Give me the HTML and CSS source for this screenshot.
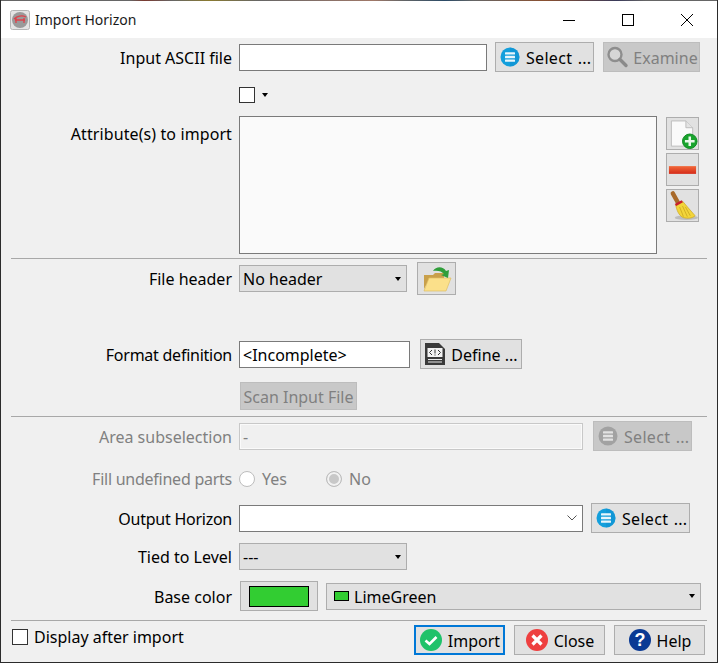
FILE: index.html
```html
<!DOCTYPE html>
<html>
<head>
  <title>Import Horizon</title>
  <link rel="stylesheet" href="styles.css">
</head>
<body>
  <svg class="defs" width="0" height="0">
    <symbol id="ico-select" viewBox="0 0 20 20">
      <circle cx="10" cy="10" r="9.5" fill="#139fdc"/>
      <path d="M10 .5a9.5 9.5 0 0 1 0 19z" fill="#0f8fd0" opacity=".5"/>
      <rect x="5" y="5.2" width="10" height="2.4" rx=".5" fill="#e8f6fc"/>
      <rect x="5" y="8.8" width="10" height="2.4" rx=".5" fill="#e8f6fc"/>
      <rect x="5" y="12.4" width="10" height="2.4" rx=".5" fill="#e8f6fc"/>
    </symbol>
    <symbol id="ico-select-off" viewBox="0 0 20 20">
      <circle cx="10" cy="10" r="9.5" fill="#a2a2a2"/>
      <rect x="5" y="5.2" width="10" height="2.4" rx=".5" fill="#e2e2e2"/>
      <rect x="5" y="8.8" width="10" height="2.4" rx=".5" fill="#e2e2e2"/>
      <rect x="5" y="12.4" width="10" height="2.4" rx=".5" fill="#e2e2e2"/>
    </symbol>
  </svg>

  <div class="window">
    <div class="desk-strip"></div>
    <div class="titlebar">
      <svg class="app-icon" width="20" height="20" viewBox="0 0 20 20">
        <rect x=".5" y=".5" width="19" height="19" rx="2" fill="#e4e4e4" stroke="#b5b5b5"/>
        <circle cx="10" cy="10" r="8" fill="#9a9a9a"/>
        <path d="M4 9c3-3 8-4 12-2M6 8v5M14 8v5M5 10h10" fill="none" stroke="#e0404a" stroke-width="1.3"/>
      </svg>
      <span class="title">Import Horizon</span>
      <div class="win-controls">
        <svg width="12" height="12" viewBox="0 0 12 12" class="wc wc-min"><path d="M0 6.5h12" stroke="#000"/></svg>
        <svg width="12" height="12" viewBox="0 0 12 12" class="wc wc-max"><rect x=".5" y=".5" width="11" height="11" fill="none" stroke="#000"/></svg>
        <svg width="12" height="12" viewBox="0 0 12 12" class="wc wc-close"><path d="M0 0l12 12M12 0L0 12" stroke="#000"/></svg>
      </div>
    </div>

    <div class="form">
      <div class="row r-input">
        <label class="lbl">Input ASCII file</label>
        <div class="field w-248"></div>
        <button class="btn btn-select">
          <svg width="20" height="20"><use href="#ico-select"/></svg><span class="txt">Select ...</span>
        </button>
        <button class="btn off btn-examine">
          <svg width="24" height="24" viewBox="0 0 24 24">
            <circle cx="10" cy="9.5" r="6.5" fill="#d6d6d6" stroke="#8e8e8e" stroke-width="2.4"/>
            <path d="M15 14.500l6 6" stroke="#8a8a8a" stroke-width="3.4" stroke-linecap="round"/>
          </svg><span class="txt">Examine</span>
        </button>
      </div>

      <div class="row r-check">
        <span class="check"></span>
        <span class="caret small"></span>
      </div>

      <div class="row r-attrs">
        <label class="lbl loose">Attribute(s) to import</label>
        <div class="listbox"></div>
        <div class="tool-col">
          <button class="tool">
            <svg width="32" height="32" viewBox="0 0 32 32">
              <path d="M4.500 2.500h15l7 7v19h-22z" fill="#fafafa" stroke="#bdbdbd"/>
              <path d="M19.500 2.500v7h7" fill="#e4e4e4" stroke="#bdbdbd"/>
              <circle cx="23.500" cy="23.500" r="7.500" fill="#18a32d" stroke="#0f8a22"/>
              <path d="M23.500 18.500v10M18.500 23.500h10" stroke="#e9f7ea" stroke-width="2.600"/>
            </svg>
          </button>
          <button class="tool">
            <svg width="32" height="32" viewBox="0 0 32 32">
              <defs><linearGradient id="minus" x1="0" y1="0" x2="0" y2="1"><stop offset="0" stop-color="#f2693a"/><stop offset="1" stop-color="#d42a18"/></linearGradient></defs>
              <rect x="2" y="12" width="28" height="8" fill="url(#minus)"/>
            </svg>
          </button>
          <button class="tool">
            <svg width="32" height="32" viewBox="0 0 32 32">
              <ellipse cx="20" cy="28" rx="12" ry="2.500" fill="#bdbdbd"/>
              <path d="M6 3l5 9" stroke="#a86a2a" stroke-width="4.500" stroke-linecap="round"/>
              <path d="M9 15l7-4 6 7 7 8c-3 3-8 3-12 2-5-2-7-8-8-13z" fill="#f2d53a" stroke="#c9a51e" stroke-width=".7"/>
              <path d="M13 17l4 10M16 16l5 11M19 17l5 9" stroke="#c9a51e" stroke-width=".8"/>
              <path d="M8 14l7-4 1.500 2-7 4z" fill="#c8202c"/>
            </svg>
          </button>
        </div>
      </div>

      <hr class="sep s-1">

      <div class="row r-header">
        <label class="lbl flat">File header</label>
        <div class="combo w-168">No header<span class="caret"></span></div>
        <button class="tool folder">
          <svg width="32" height="28" viewBox="0 0 32 28">
            <path d="M3 10h9l2-2h9v5H9L3 24z" fill="#c9a04a"/>
            <path d="M8 13h22l-5 13H3z" fill="#fbe08a" stroke="#e0bf62" stroke-width=".7"/>
            <path d="M12 6c3-5 10-5 13 0l3-1-1 8-7-3 3-1c-2-3-7-4-11-3z" fill="#2f9e3a"/>
          </svg>
        </button>
      </div>

      <div class="row r-format">
        <label class="lbl tight">Format definition</label>
        <div class="field w-171"><span class="txt">&lt;Incomplete&gt;</span></div>
        <button class="btn btn-define">
          <svg width="22" height="24" viewBox="0 0 22 24">
            <path d="M1 1h14l6 6v16H1z" fill="#3a3a3a"/>
            <rect x="3.500" y="6" width="15" height="9" fill="#f2f2f2"/>
            <path d="M8 8l-2.500 2.500L8 13M14 8l2.500 2.500L14 13M11 7.500v4M11 12.500v1" fill="none" stroke="#333" stroke-width="1"/>
            <path d="M4 17.500h14M4 20h14" stroke="#e8e8e8"/>
          </svg><span class="txt">Define ...</span>
        </button>
      </div>

      <div class="row r-scan">
        <button class="btn off btn-scan"><span class="txt">Scan Input File</span></button>
      </div>

      <hr class="sep s-2">

      <div class="row r-area">
        <label class="lbl dim">Area subselection</label>
        <div class="field off w-344"><span class="txt">-</span></div>
        <button class="btn off btn-select">
          <svg width="20" height="20"><use href="#ico-select-off"/></svg><span class="txt">Select ...</span>
        </button>
      </div>

      <div class="row r-fill">
        <label class="lbl dim flat tight">Fill undefined parts</label>
        <span class="radio"></span><span class="radio-text yes">Yes</span>
        <span class="radio on"></span><span class="radio-text">No</span>
      </div>

      <div class="row r-output">
        <label class="lbl tight">Output Horizon</label>
        <div class="field w-344 edit-combo">
          <svg width="12" height="8" viewBox="0 0 12 8"><path d="M1.500 1.500L6 6l4.500-4.500" fill="none" stroke="#555"/></svg>
        </div>
        <button class="btn btn-select g-8">
          <svg width="20" height="20"><use href="#ico-select"/></svg><span class="txt">Select ...</span>
        </button>
      </div>

      <div class="row r-tied">
        <label class="lbl flat">Tied to Level</label>
        <div class="combo w-168">---<span class="caret"></span></div>
      </div>

      <div class="row r-base">
        <label class="lbl">Base color</label>
        <button class="btn swatch-btn"><span class="swatch"></span></button>
        <div class="combo color-combo"><span class="chip"></span><span class="txt">LimeGreen</span><span class="caret"></span></div>
      </div>

      <hr class="sep s-3">

      <div class="row r-bottom">
        <span class="check lifted"></span>
        <span class="after-label lifted">Display after import</span>
        <div class="actions">
          <button class="btn action default">
            <svg width="24" height="24" viewBox="0 0 24 24">
              <circle cx="12" cy="12" r="11" fill="#1fc26a"/>
              <path d="M6.500 12.500l4 3.500 7-7" fill="none" stroke="#fff" stroke-width="2.600"/>
            </svg><span class="txt">Import</span>
          </button>
          <button class="btn action">
            <svg width="24" height="24" viewBox="0 0 24 24">
              <circle cx="12" cy="12" r="11" fill="#ee4040"/>
              <path d="M7.500 7.500l9 9M16.500 7.500l-9 9" stroke="#fff" stroke-width="3.200"/>
            </svg><span class="txt">Close</span>
          </button>
          <button class="btn action">
            <svg width="24" height="24" viewBox="0 0 24 24">
              <circle cx="12" cy="12" r="11" fill="#0a3a94"/>
              <text x="12" y="18" text-anchor="middle" class="help-mark">?</text>
            </svg><span class="txt">Help</span>
          </button>
        </div>
      </div>
    </div>
  </div>
</body>
</html>
```

FILE: styles.css
```css
* {
  box-sizing: border-box;
}

body {
  margin: 0;
  background-color: #f0f0f0;
  font-family: "Noto Sans", "Open Sans", sans-serif;
  font-size: 16px;
  color: #000;
}

.defs {
  position: absolute;
}

.window {
  width: 718px;
  height: 663px;
  border: 1px solid #2b2b2b;
  border-top: none;
  background-color: #f0f0f0;
  overflow: hidden;
}

/* the desktop shows through along the top edge */
.desk-strip {
  height: 1px;
  background: linear-gradient(90deg, #666 0, #666 18%, #7a3a30 20%, #666 24%, #8a7a30 29%, #666 36%, #a07868 52%, #666 56%, #2a4a66 62%, #666 66%, #8a5030 76%, #3a3a5a 86%, #666 90%);
}

.titlebar {
  height: 37px;
  background-color: #fff;
  display: flex;
  align-items: center;
  padding-left: 9px;
}

.app-icon {
  margin-right: 5px;
}

.title {
  font-size: 14px;
  color: #1a1a1a;
}

.win-controls {
  margin-left: auto;
  display: flex;
  margin-right: 24px;
}

.wc-min {
  margin-right: 47px;
}

.wc-max {
  margin-right: 47px;
}

.row {
  display: flex;
  align-items: center;
}

.lbl {
  width: 231px;
  margin-right: 7px;
  padding-top: 2px;
  text-align: right;
  white-space: nowrap;
}

.lbl.flat {
  padding-top: 0;
}

.tight {
  letter-spacing: -.25px;
}

.loose {
  letter-spacing: .1px;
}

.txt {
  padding-top: 2px;
}

.dim,
.radio-text {
  color: #808080;
}

.r-input { height: 30px; margin-top: 4px; }
.r-check { height: 16px; margin-top: 15px; padding-left: 238px; }
.r-attrs { height: 138px; margin-top: 13px; align-items: flex-start; }
.r-attrs .lbl { margin-top: 5px; }
.r-header { height: 33px; margin-top: 3px; }
.r-format { height: 30px; margin-top: 44px; }
.r-scan { height: 28px; margin-top: 13px; padding-left: 238px; }
.r-area { height: 30px; margin-top: 4px; }
.r-fill { height: 16px; margin-top: 20px; }
.r-output { height: 30px; margin-top: 16px; }
.r-tied { height: 27px; margin-top: 10px; }
.r-base { height: 30px; margin-top: 11px; }
.r-bottom { height: 30px; margin-top: 4px; padding-left: 11px; }

.sep {
  margin: 0 10px;
  height: 1px;
  border: none;
  background-color: #a8a8a8;
}

.s-1 { margin-top: 4px; margin-bottom: 0; }
.s-2 { margin-top: 6px; margin-bottom: 0; }
.s-3 { margin-top: 9px; margin-bottom: 0; }

.field {
  height: 27px;
  border: 1px solid #7a7a7a;
  background-color: #fff;
  padding-left: 3px;
  display: flex;
  align-items: center;
  white-space: nowrap;
}

.field.off {
  border-color: #c8c8c8;
  background-color: #f0f0f0;
  box-shadow: inset 0 0 0 1px #fafafa;
  color: #808080;
}

.w-248 { width: 248px; }
.w-171 { width: 171px; }
.w-344 { width: 344px; }
.w-168 { width: 168px; }

.edit-combo {
  justify-content: flex-end;
  padding-right: 4px;
}

.btn {
  height: 30px;
  display: flex;
  align-items: center;
  justify-content: center;
  gap: 5px;
  padding: 0;
  margin-left: 8px;
  border: 1px solid #adadad;
  background-color: #e1e1e1;
  font: inherit;
  color: #000;
  white-space: nowrap;
}

.btn.off {
  background-color: #c8c8c8;
  border-color: #bdbdbd;
  color: #808080;
}

.btn-select {
  width: 99px;
  margin-left: 10px;
  justify-content: flex-start;
  padding-left: 4px;
  gap: 6px;
}

.btn-select .txt { word-spacing: 1px; letter-spacing: .3px; }
.r-input .btn-select { margin-left: 8px; }
.btn-select.g-8 { margin-left: 8px; }
.btn-examine { width: 97px; margin-left: 9px; gap: 4px; }
.btn-define { width: 102px; margin-left: 10px; }
.btn-scan { width: 117px; height: 28px; margin-left: 1px; }

.check {
  display: block;
  width: 16px;
  height: 16px;
  border: 1px solid #333;
  background-color: #fff;
}

.lifted {
  margin-bottom: 6px;
}

.caret {
  display: block;
  width: 0;
  height: 0;
  border-left: 3.500px solid transparent;
  border-right: 3.500px solid transparent;
  border-top: 4px solid #000;
}

.caret.small {
  margin-left: 7px;
}

.listbox {
  width: 418px;
  height: 138px;
  border: 1px solid #7a7a7a;
  background-color: #fafafa;
}

.tool-col {
  margin-left: 9px;
  margin-top: 1px;
  display: flex;
  flex-direction: column;
  gap: 3px;
}

.tool {
  width: 33px;
  height: 33px;
  padding: 0;
  border: 1px solid #adadad;
  background-color: #e1e1e1;
  display: flex;
  align-items: center;
  justify-content: center;
}

.combo {
  height: 27px;
  border: 1px solid #adadad;
  background-color: #e1e1e1;
  padding: 0 3px;
  display: flex;
  align-items: center;
  white-space: nowrap;
}

.combo .caret {
  margin-left: auto;
  margin-right: 2px;
}

.tool.folder {
  width: 39px;
  margin-left: 10px;
}

.radio {
  display: block;
  width: 16px;
  height: 16px;
  border: 1px solid #bdbdbd;
  border-radius: 50%;
  background-color: #fff;
}

.radio.on {
  background-color: #c8c8c8;
  box-shadow: inset 0 0 0 2px #f2f2f2;
}

.radio-text {
  margin-left: 7px;
}

.radio-text.yes {
  width: 64px;
}

.swatch-btn {
  width: 78px;
  margin-left: 1px;
}

.swatch {
  display: block;
  width: 60px;
  height: 21px;
  background-color: #32cd32;
  border: 1px solid #000;
}

.color-combo {
  width: 375px;
  margin-left: 8px;
  padding-left: 7px;
}

.chip {
  display: block;
  width: 15px;
  height: 10px;
  margin-right: 5px;
  background-color: #32cd32;
  border: 1px solid #000;
}

.after-label {
  margin-left: 6px;
}

.actions {
  margin-left: auto;
  display: flex;
  gap: 9px;
  margin-right: 12px;
}

.action {
  width: 91px;
  margin-left: 0;
}

.action.default {
  border: 2px solid #0078d7;
}

.help-mark {
  font-family: "Liberation Sans", sans-serif;
  font-size: 18px;
  font-weight: bold;
  fill: #fff;
}
```
